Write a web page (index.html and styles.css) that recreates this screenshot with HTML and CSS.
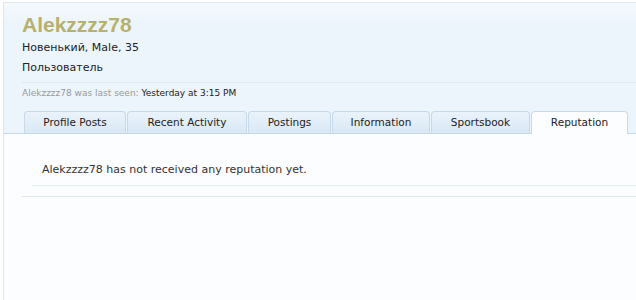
FILE: index.html
```html
<!DOCTYPE html>
<html lang="ru">
<head>
    <meta charset="UTF-8">
    <title>Alekzzzz78</title>
    <link rel="stylesheet" href="styles.css">
</head>
<body>
    <div class="profile">
        <div class="header">
            <h1 class="username">Alekzzzz78</h1>
            <p class="info">Новенький, Male, 35</p>
            <p class="info">Пользователь</p>
            <p class="last-seen">Alekzzzz78 was last seen: <span class="seen-time">Yesterday at 3:15 PM</span></p>
            <ul class="tabs">
                <li class="tab" style="width: 102px">Profile Posts</li>
                <li class="tab" style="width: 120px">Recent Activity</li>
                <li class="tab" style="width: 83px">Postings</li>
                <li class="tab" style="width: 98px">Information</li>
                <li class="tab" style="width: 99px">Sportsbook</li>
                <li class="tab active" style="width: 97px">Reputation</li>
            </ul>
        </div>
        <div class="content">
            <div class="message">Alekzzzz78 has not received any reputation yet.</div>
            <div class="divider"></div>
        </div>
    </div>
</body>
</html>
```

FILE: styles.css
```css
* {
    margin: 0;
    padding: 0;
    box-sizing: border-box;
}

body {
    font-family: "DejaVu Sans", Verdana, sans-serif;
    background-color: #ffffff;
    color: #333;
    padding: 2px 0 0 3px;
    overflow: hidden;
}
.profile {
    width: 660px;
    height: 310px;
    border: 1px solid #dfe8f0;
    border-right: none;
    background-color: #fcfdff;
}
.header {
    background: linear-gradient(#f4f9fd, #edf5fc 20px, #edf5fc);
    padding: 9px 0 0 18px;
    border-bottom: 1px solid #c7d9e8;
}
.username {
    font-family: "Liberation Sans", Arial, sans-serif;
    font-size: 21px;
    font-weight: bold;
    color: #b7b06f;
    line-height: 26px;
}
.info {
    font-size: 11px;
    line-height: 20px;
    color: #222;
}
.last-seen {
    margin-top: 4px;
    border-top: 1px solid #dde9f3;
    padding-top: 3px;
    font-size: 9px;
    line-height: 14px;
    color: #999;
}
.seen-time {
    color: #222;
}
.tabs {
    display: flex;
    list-style: none;
    margin: 11px 0 0 2px;
}
.tab {
    height: 22px;
    margin-right: 1px;
    border: 1px solid #c7d9e8;
    border-bottom: none;
    border-radius: 4px 4px 0 0;
    background: linear-gradient(#eaf3fb, #d9e8f5);
    text-align: center;
    font-size: 10.5px;
    line-height: 21px;
    color: #222;
}
.tab.active {
    background: #fcfdff;
    height: 23px;
    margin-bottom: -1px;
}
.content {
    padding: 26px 0 0 0;
}
.message {
    margin-left: 28px;
    padding: 0 0 5px 10px;
    font-size: 11px;
    line-height: 20px;
    color: #333;
    border-bottom: 1px solid #e3eef3;
}
.divider {
    margin: 10px 0 0 18px;
    border-top: 1px solid #dceaee;
}
```
